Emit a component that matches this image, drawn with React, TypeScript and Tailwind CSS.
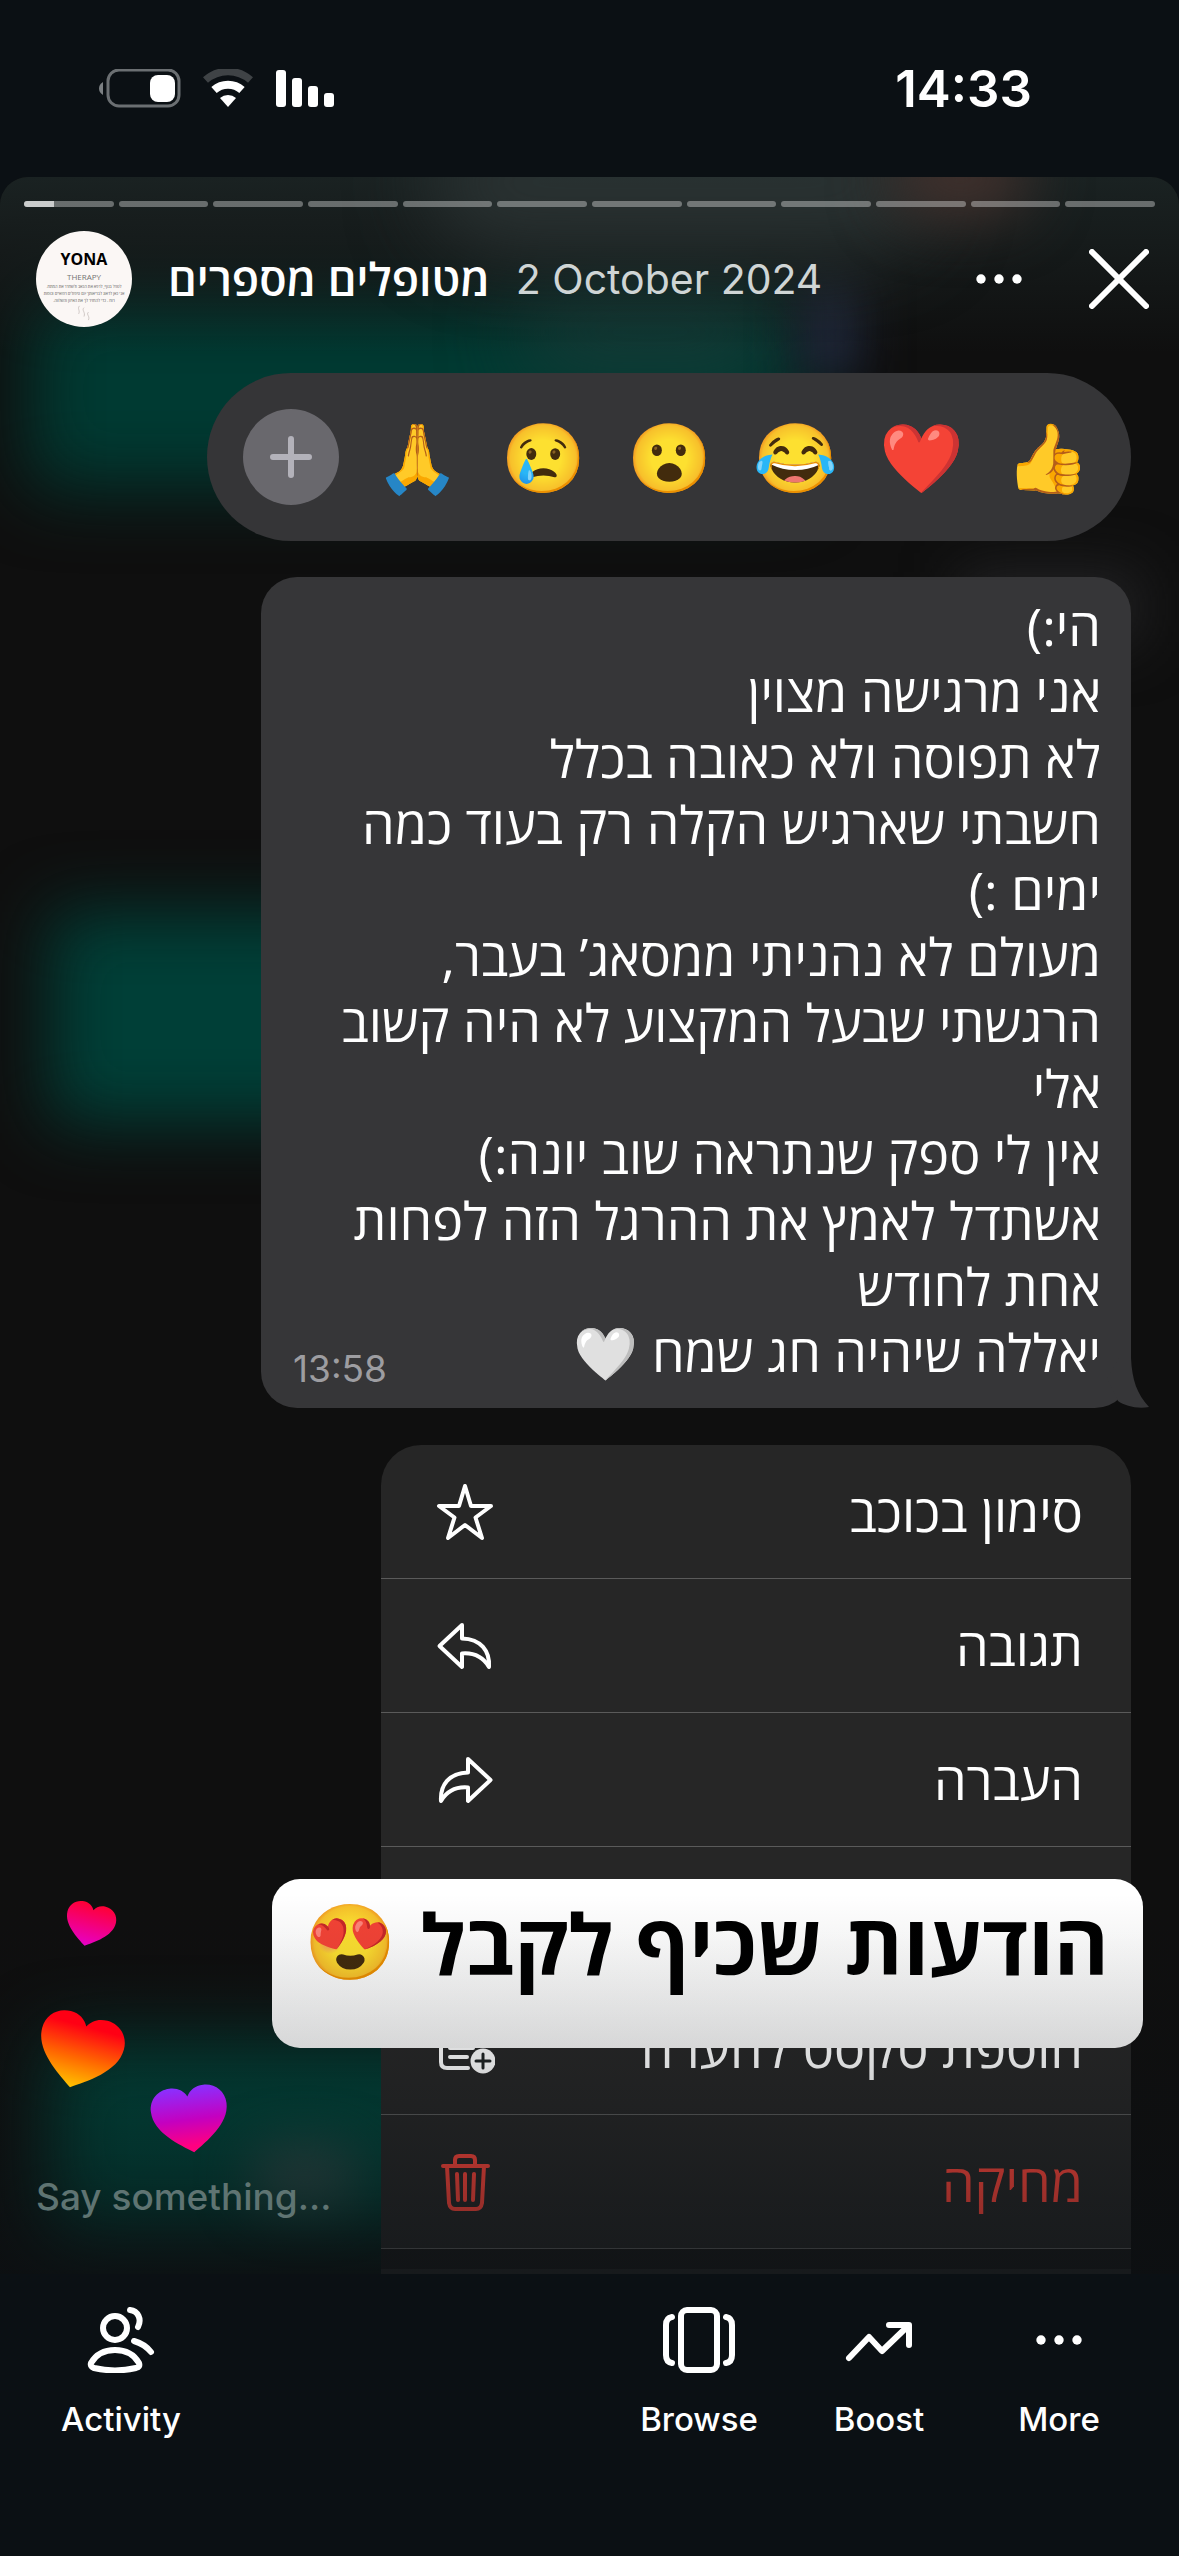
import type { ReactNode } from "react";

const REACTIONS = [
  { emoji: "🙏", label: "Thanks" },
  { emoji: "😢", label: "Sad" },
  { emoji: "😮", label: "Wow" },
  { emoji: "😂", label: "Haha" },
  { emoji: "❤️", label: "Love" },
  { emoji: "👍", label: "Like" },
];

const MESSAGE_LINES = [
  "הי:)",
  "אני מרגישה מצוין",
  "לא תפוסה ולא כאובה בכלל",
  "חשבתי שארגיש הקלה רק בעוד כמה",
  "ימים :)",
  "מעולם לא נהניתי ממסאג’ בעבר,",
  "הרגשתי שבעל המקצוע לא היה קשוב",
  "אלי",
  "אין לי ספק שנתראה שוב יונה:)",
  "אשתדל לאמץ את ההרגל הזה לפחות",
  "אחת לחודש",
];

const SEGMENTS = 12;

const HEART =
  "M50 92C34 80 3 60 3 32C3 15 15 4 29 4C39 4 46 9 50 17C54 9 61 4 71 4C85 4 97 15 97 32C97 60 66 80 50 92Z";

function StatusBar() {
  return (
    <div className="flex h-[177px] items-center justify-between pl-[99px] pr-[147px]">
      <svg viewBox="0 0 236 40" className="h-10 w-[236px]" aria-hidden="true">
        <path d="M4 13C1 15 0 17 0 19.500C0 22 1 24 4 26Z" fill="#7c8083" />
        <rect x="9" y="1" width="71" height="36" rx="11" fill="none" stroke="#6b6f72" strokeWidth="3" />
        <rect x="51" y="6" width="25" height="27" rx="8" fill="#fff" />
        <path d="M106.500 11A34 34 0 0 1 151.500 11" fill="none" stroke="#3f4346" strokeWidth="7.500" />
        <path d="M115 21A21 21 0 0 1 143 21" fill="none" stroke="#fff" strokeWidth="8" />
        <path d="M129 38L121 29A12 12 0 0 1 137 29Z" fill="#fff" />
        <rect x="177" y="1" width="10" height="37" rx="3" fill="#fff" />
        <rect x="193" y="9" width="10" height="29" rx="3" fill="#fff" />
        <rect x="209" y="17" width="10" height="21" rx="3" fill="#fff" />
        <rect x="225" y="24" width="10" height="14" rx="3" fill="#fff" />
      </svg>
      <time className="text-[51px] font-semibold leading-[60px]">14:33</time>
    </div>
  );
}

function Backdrop() {
  return (
    <div className="absolute inset-0 overflow-hidden" aria-hidden="true">
      <div className="absolute left-[30px] top-[120px] h-[190px] w-[770px] bg-[#003a32] blur-[36px]" />
      <div className="absolute left-[520px] top-[110px] h-[90px] w-[260px] rounded-full bg-[#143a36] blur-[40px]" />
      <div className="absolute left-[800px] top-[100px] h-[100px] w-[60px] bg-[#20263a] blur-[24px]" />
      <div className="absolute inset-x-0 top-0 h-44 bg-gradient-to-b from-[#1a2222] to-transparent" />
      <div className="absolute left-[430px] top-[-60px] h-[130px] w-[500px] rounded-full bg-[#2a3232] blur-[40px]" />
      <div className="absolute left-[890px] top-[-40px] h-[80px] w-[140px] rounded-full bg-[#42312d] blur-[30px]" />
      <div className="absolute left-[50px] top-[735px] h-[210px] w-[320px] bg-[#003f37] blur-[34px]" />
      <div className="absolute left-[960px] top-[395px] h-[70px] w-[180px] bg-[#232325] blur-[28px]" />
      <div className="absolute left-[50px] top-[1865px] h-[190px] w-[500px] bg-[#004238] blur-[36px]" />
      <div className="absolute left-[250px] top-[1970px] h-[60px] w-[110px] rounded-full bg-[#2d4846] blur-[26px]" />
    </div>
  );
}

function Avatar() {
  return (
    <div className="flex h-24 w-24 shrink-0 flex-col items-center rounded-full bg-[#fbf7f5] pt-5 font-['Open_Sans'] text-black">
      <span className="text-base font-bold leading-4">YONA</span>
      <span className="mt-1 text-[8px] leading-3 text-neutral-500">THERAPY</span>
      <span dir="rtl" className="whitespace-nowrap text-center text-[4px] leading-[7px] text-neutral-600">
        לטפל בגוף, לרפא את הכאב ולשחרר את המתח.
        <br />
        אני כאן לדאוג לבריאותך עם טיפולים רפואיים וכוסות
        <br />
        רוח - כדי להחזיר לך את האיזון והשלווה.
      </span>
      <svg viewBox="0 0 16 18" className="mt-px h-4 w-4" fill="none" stroke="#c9c1bd" aria-hidden="true">
        <path d="M3 1C0 4 4 6 2 10M8 3C5 6 10 8 8 13M13 8C10 11 15 12 13 17" />
      </svg>
    </div>
  );
}

function StoryHeader() {
  return (
    <header className="relative px-6 pt-6">
      <div className="flex gap-[5px]">
        {Array.from({ length: SEGMENTS }, (_, i) => (
          <div key={i} className="h-1.5 flex-1 overflow-hidden rounded-full bg-white/35">
            {i === 0 && <div className="h-full w-1/3 bg-white/65" />}
          </div>
        ))}
      </div>
      <div className="mt-6 flex h-24 items-center pl-3 pr-1.5">
        <Avatar />
        <h1 dir="rtl" className="ml-9 font-['Open_Sans'] text-[45px] font-semibold leading-[60px]">
          מטופלים מספרים
        </h1>
        <span className="ml-[26px] text-[41px] leading-[60px] text-[#cfd5d5]">2 October 2024</span>
        <button type="button" aria-label="Options" className="ml-auto">
          <Dots />
        </button>
        <button type="button" aria-label="Close" className="ml-[67px]">
          <svg viewBox="0 0 60 60" className="h-15 w-15" aria-hidden="true">
            <path d="M3 3L57 57M57 3L3 57" stroke="#fff" strokeWidth="6" strokeLinecap="round" />
          </svg>
        </button>
      </div>
    </header>
  );
}

function Dots() {
  return (
    <svg viewBox="0 0 46 66" className="h-[66px] w-[46px]" fill="#fff" aria-hidden="true">
      <circle cx="5" cy="33" r="4.700" />
      <circle cx="23" cy="33" r="4.700" />
      <circle cx="41" cy="33" r="4.700" />
    </svg>
  );
}

function ReactionBar() {
  return (
    <div className="flex h-[168px] items-center gap-[30px] rounded-full bg-[#353537] px-9">
      <button
        type="button"
        aria-label="More reactions"
        className="flex h-24 w-24 items-center justify-center rounded-full bg-[#69686d]"
      >
        <svg viewBox="0 0 42 42" className="h-[42px] w-[42px]" aria-hidden="true">
          <path d="M21 3V39M3 21H39" stroke="#b3b2ba" strokeWidth="6" strokeLinecap="round" />
        </svg>
      </button>
      {REACTIONS.map((r) => (
        <button
          key={r.label}
          type="button"
          aria-label={r.label}
          className="flex h-24 w-24 items-center justify-center text-[68px] leading-[92px]"
        >
          {r.emoji}
        </button>
      ))}
    </div>
  );
}

function MessageBubble() {
  return (
    <div className="relative mt-9 w-[870px] rounded-[36px] bg-[#363638] pb-[23px] pl-8 pr-[30px] pt-4">
      <svg viewBox="0 0 42 50" className="absolute bottom-0 right-[-18px] h-[50px] w-[42px]" aria-hidden="true">
        <path d="M24 0C25 22 30 36 42 49C30 51 18 48 11 43L0 20L12 0Z" fill="#363638" />
      </svg>
      <div dir="rtl" className="relative whitespace-nowrap font-['Open_Sans'] text-[52px] leading-[66px]">
        {MESSAGE_LINES.map((line) => (
          <p key={line}>{line}</p>
        ))}
        <div className="flex h-[66px] items-start justify-between">
          <p>יאללה שיהיה חג שמח 🤍</p>
          <time className="self-end font-['Inter'] text-[37px] leading-8 text-[#9d9da1]">13:58</time>
        </div>
      </div>
    </div>
  );
}

function MenuIcon({ children }: { children: ReactNode }) {
  return (
    <svg
      viewBox="0 0 60 60"
      className="h-15 w-15"
      fill="none"
      stroke="currentColor"
      strokeWidth="4"
      strokeLinecap="round"
      strokeLinejoin="round"
      aria-hidden="true"
    >
      {children}
    </svg>
  );
}

type MenuEntry = { label: string; danger?: boolean; icon: ReactNode };

const MENU: MenuEntry[] = [
  {
    label: "סימון בכוכב",
    icon: <path d="M30 4L36 24H56L40.500 35.500L47 56L30 43L13 56L19.500 35.500L4 24H24Z" />,
  },
  {
    label: "תגובה",
    icon: <path d="M27 9L4.500 30L27 51V37.500C39 36.500 48 41 54 51C55 35 46 23 27 22.500Z" />,
  },
  {
    label: "העברה",
    icon: <path d="M33 9L55.500 30L33 51V37.500C21 36.500 12 41 6 51C5 35 14 23 33 22.500Z" />,
  },
];

const MENU_END: MenuEntry[] = [
  {
    label: "הוספת טקסט להערה",
    icon: (
      <>
        <path d="M33 50H12Q6 50 6 44V14Q6 8 12 8H44Q50 8 50 14V26M15 20H41M15 30H38M15 39H32" />
        <circle cx="48" cy="43" r="12.500" fill="currentColor" stroke="none" />
        <path d="M41 43H55M48 36V50" stroke="#1f2323" strokeWidth="3" />
      </>
    ),
  },
  {
    label: "מחיקה",
    danger: true,
    icon: (
      <path d="M8 14H53M20 14V8Q20 4 24 4H36Q40 4 40 8V14M12 14L14 51Q15 57 20 57H41Q46 57 47 51L49 14M22 22L23 48M30 22V48M39 22L38 48" />
    ),
  },
];

function MenuRow({ item }: { item: MenuEntry }) {
  return (
    <li className="border-b border-[#5a5a5a] pt-px">
      <button
        type="button"
        className={`flex h-[132px] w-full items-center justify-between pl-[54px] pr-12 font-['Open_Sans'] text-[52px] leading-[66px] ${
          item.danger ? "text-[#ff453a]" : "text-white"
        }`}
      >
        {item.label}
        <MenuIcon>{item.icon}</MenuIcon>
      </button>
    </li>
  );
}

function ContextMenu() {
  return (
    <ul dir="rtl" className="mt-[37px] w-[750px] overflow-hidden rounded-t-[40px] bg-[#262626]">
      {MENU.map((item) => (
        <MenuRow key={item.label} item={item} />
      ))}
      {/* this row sits behind the sticker */}
      <li className="h-[134px] border-b border-[#5a5a5a]" aria-hidden="true" />
      {MENU_END.map((item) => (
        <MenuRow key={item.label} item={item} />
      ))}
      <li className="h-5 bg-[#191919]" />
      <li className="h-[5px]" />
    </ul>
  );
}

function Sticker() {
  return (
    <div
      dir="rtl"
      className="absolute bottom-[226px] right-9 flex h-[169px] w-[871px] items-start justify-between rounded-[28px] bg-gradient-to-b from-white from-30% to-[#f6f6f6] pl-8 pr-[34px] pt-1"
    >
      <p className="font-['Open_Sans'] text-[84px] font-bold leading-[120px] text-black">הודעות שכיף לקבל</p>
      <span className="text-[74px] leading-[116px]">😍</span>
    </div>
  );
}

function FloatingHearts() {
  return (
    <svg
      viewBox="0 0 220 270"
      className="absolute bottom-[114px] left-[30px] h-[270px] w-[220px]"
      aria-hidden="true"
    >
      <defs>
        <linearGradient id="pink" x1="0" y1="0" x2="0" y2="1">
          <stop offset="0" stopColor="#ff0034" />
          <stop offset="1" stopColor="#e600c8" />
        </linearGradient>
        <linearGradient id="orange" x1="0" y1="0" x2="0" y2="1">
          <stop offset="0.15" stopColor="#ff0014" />
          <stop offset="0.6" stopColor="#ff6a00" />
          <stop offset="1" stopColor="#ffc400" />
        </linearGradient>
        <linearGradient id="purple" x1="0" y1="0" x2="0" y2="1">
          <stop offset="0" stopColor="#8a30ff" />
          <stop offset="0.5" stopColor="#c400c0" />
          <stop offset="0.9" stopColor="#ff0080" />
        </linearGradient>
      </defs>
      <path d={HEART} fill="url(#pink)" transform="translate(60 34) rotate(14) scale(.53 .49) translate(-50 -46)" />
      <path d={HEART} fill="url(#orange)" transform="translate(50 160) rotate(15) scale(.9 .84) translate(-50 -46)" />
      <path d={HEART} fill="url(#purple)" transform="translate(160 228) rotate(-7) scale(.81 .75) translate(-50 -46)" />
    </svg>
  );
}

function BottomTab({ label, children }: { label: string; children: ReactNode }) {
  return (
    <button type="button" className="flex w-[180px] flex-col items-center">
      {children}
      <span className="mt-[26px] text-[33px] font-medium leading-10">{label}</span>
    </button>
  );
}

function TabIcon({ children }: { children: ReactNode }) {
  return (
    <svg
      viewBox="0 0 72 66"
      className="h-[66px] w-[72px]"
      fill="none"
      stroke="#fff"
      strokeWidth="6"
      strokeLinecap="round"
      strokeLinejoin="round"
      aria-hidden="true"
    >
      {children}
    </svg>
  );
}

function BottomBar() {
  return (
    <nav className="flex h-[283px] items-start pl-[31px] pr-[30px] pt-[33px]">
      <BottomTab label="Activity">
        <TabIcon>
          <ellipse cx="30" cy="21" rx="12" ry="12" />
          <path d="M30 43C18 43 10 49 6 56C5 59 7 60 9 61C22 64 38 64 51 61C54 60 55 59 54 56C50 49 42 43 30 43Z" />
          <path d="M45 3C53 4 57 12 53 20M49 34C56 36 62 40 66 45" />
        </TabIcon>
      </BottomTab>
      <div className="flex-1" />
      <BottomTab label="Browse">
        <TabIcon>
          <rect x="18" y="3" width="36" height="60" rx="6" />
          <path d="M9 10Q3 11 3 18V48Q3 55 9 56M63 10Q69 11 69 18V48Q69 55 63 56" />
        </TabIcon>
      </BottomTab>
      <BottomTab label="Boost">
        <TabIcon>
          <path d="M6 51L26 30L39 44L65 19M46 18H66V38" />
        </TabIcon>
      </BottomTab>
      <BottomTab label="More">
        <Dots />
      </BottomTab>
    </nav>
  );
}

export default function App() {
  return (
    <div className="flex min-h-screen flex-col bg-[#0b1014] font-['Inter',sans-serif] text-white">
      <StatusBar />
      <main className="relative flex-1 overflow-hidden rounded-t-[28px] bg-[#0f0f0f]">
        <Backdrop />
        <StoryHeader />
        <div className="relative mt-[46px] flex flex-col items-end pr-12">
          <ReactionBar />
          <MessageBubble />
          <ContextMenu />
        </div>
        <Sticker />
        <div className="pointer-events-none absolute inset-x-0 bottom-0 h-[380px] bg-gradient-to-b from-transparent via-[#0b1014]/15 via-45% to-[#0b1014]/55" />
        <FloatingHearts />
        <input
          type="text"
          aria-label="Reply"
          placeholder="Say something..."
          className="absolute bottom-[50px] left-9 w-[320px] bg-transparent text-[37px] font-medium leading-[54px] outline-none placeholder:text-[#5f7472]"
        />
      </main>
      <BottomBar />
    </div>
  );
}
